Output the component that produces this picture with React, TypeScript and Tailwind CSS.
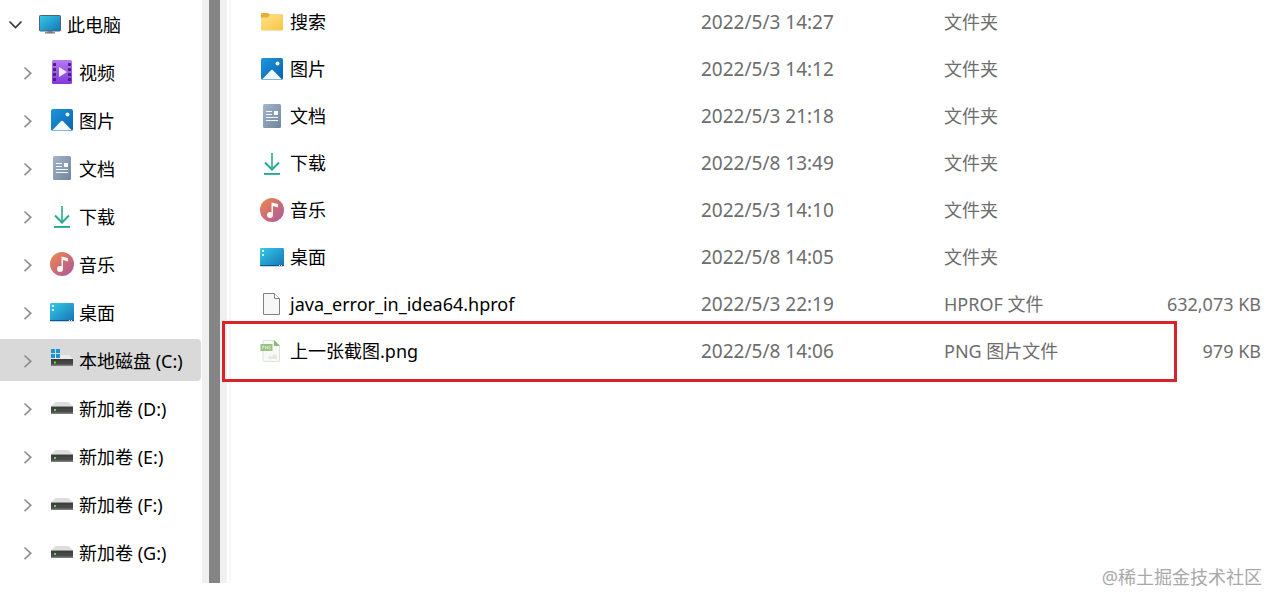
import React, { useState } from 'react';
import clsx from 'clsx';

type IconName =
  | 'pc' | 'video' | 'picture' | 'document' | 'download' | 'music'
  | 'desktop' | 'system' | 'drive' | 'folder' | 'file' | 'png';

interface TreeNode {
  label: string;
  icon: IconName;
}

interface FileRow {
  name: string;
  icon: IconName;
  date: string;
  type: string;
  size?: string;
  marked?: boolean;
}

const TREE: TreeNode[] = [
  { label: '视频', icon: 'video' },
  { label: '图片', icon: 'picture' },
  { label: '文档', icon: 'document' },
  { label: '下载', icon: 'download' },
  { label: '音乐', icon: 'music' },
  { label: '桌面', icon: 'desktop' },
  { label: '本地磁盘 (C:)', icon: 'system' },
  { label: '新加卷 (D:)', icon: 'drive' },
  { label: '新加卷 (E:)', icon: 'drive' },
  { label: '新加卷 (F:)', icon: 'drive' },
  { label: '新加卷 (G:)', icon: 'drive' },
];

const FILES: FileRow[] = [
  { name: '搜索', icon: 'folder', date: '2022/5/3 14:27', type: '文件夹' },
  { name: '图片', icon: 'picture', date: '2022/5/3 14:12', type: '文件夹' },
  { name: '文档', icon: 'document', date: '2022/5/3 21:18', type: '文件夹' },
  { name: '下载', icon: 'download', date: '2022/5/8 13:49', type: '文件夹' },
  { name: '音乐', icon: 'music', date: '2022/5/3 14:10', type: '文件夹' },
  { name: '桌面', icon: 'desktop', date: '2022/5/8 14:05', type: '文件夹' },
  { name: 'java_error_in_idea64.hprof', icon: 'file', date: '2022/5/3 22:19', type: 'HPROF 文件', size: '632,073 KB' },
  { name: '上一张截图.png', icon: 'png', date: '2022/5/8 14:06', type: 'PNG 图片文件', size: '979 KB', marked: true },
];

// Shared gradients, rendered once and referenced by every icon
const Gradients = () => (
  <svg className="absolute size-0" aria-hidden="true">
    <defs>
      <linearGradient id="g-pc" x1="0" y1="0" x2="1" y2="1">
        <stop offset="0" stopColor="#35cbea" />
        <stop offset="1" stopColor="#1574b4" />
      </linearGradient>
      <linearGradient id="g-video" x1="0" y1="0" x2="0" y2="1">
        <stop offset="0" stopColor="#b57af0" />
        <stop offset="1" stopColor="#8338dc" />
      </linearGradient>
      <linearGradient id="g-picture" x1="0" y1="0" x2="1" y2="1">
        <stop offset="0" stopColor="#1c96dc" />
        <stop offset="1" stopColor="#0a63ae" />
      </linearGradient>
      <linearGradient id="g-document" x1="0" y1="0" x2="1" y2="1">
        <stop offset="0" stopColor="#a3b5ca" />
        <stop offset="1" stopColor="#71859f" />
      </linearGradient>
      <linearGradient id="g-music" x1="0" y1="0" x2="1" y2="1">
        <stop offset="0" stopColor="#ef8a52" />
        <stop offset="0.5" stopColor="#cf6d70" />
        <stop offset="1" stopColor="#a758a6" />
      </linearGradient>
      <linearGradient id="g-folder" x1="0" y1="0" x2="1" y2="1">
        <stop offset="0" stopColor="#ffe08a" />
        <stop offset="1" stopColor="#f7c645" />
      </linearGradient>
      <linearGradient id="g-drive" x1="0" y1="0" x2="0" y2="1">
        <stop offset="0" stopColor="#3a3a3a" />
        <stop offset="0.7" stopColor="#4c4c4c" />
        <stop offset="1" stopColor="#8a8a8a" />
      </linearGradient>
    </defs>
  </svg>
);

const drawings: Record<IconName, React.ReactNode> = {
  pc: (
    <>
      <path d="M9.5 19h5v2h-5z" fill="#9aa3aa" />
      <path d="M7 20.2h10v1.3H7z" fill="#6b747b" />
      <rect x="1.5" y="3.5" width="21" height="15.5" rx="0.8" fill="url(#g-pc)" stroke="#4c6570" />
    </>
  ),
  video: (
    <>
      <rect x="2" y="0" width="20" height="24" rx="1.5" fill="url(#g-video)" />
      {[3, 8, 13, 18].map(y => (
        <g key={y} fill="#4b2183">
          <rect x="3" y={y} width="3" height="3" rx="0.5" />
          <rect x="18" y={y} width="3" height="3" rx="0.5" />
        </g>
      ))}
      <path d="M9 7v10l8-5z" fill="#f3eafd" />
    </>
  ),
  picture: (
    <>
      <rect x="1" y="1" width="22" height="22" rx="2" fill="url(#g-picture)" />
      <path d="M2 22.5l8.7-9a1.8 1.8 0 0 1 2.6 0l8.7 9z" fill="#f2f9ff" />
      <circle cx="17.5" cy="6.5" r="2" fill="#e8f6ff" />
    </>
  ),
  document: (
    <>
      <rect x="3" y="0" width="18" height="24" rx="1.5" fill="url(#g-document)" />
      <path d="M6 7.5h6M6 10.5h6M6 13.500h12M6 16.500h12" stroke="#f4f7fa" strokeWidth="1.1" />
      <rect x="14" y="7" width="4" height="4" fill="#ffffff" />
    </>
  ),
  download: (
    <>
      <path d="M12 2v16.500" fill="none" stroke="#3bb795" strokeWidth="1.8" />
      <path d="M5 11.500l7 7 7-7" fill="none" stroke="#27ab92" strokeWidth="2" />
      <path d="M4 22h16v1.800H4z" fill="#1ba38f" />
    </>
  ),
  music: (
    <>
      <circle cx="12" cy="12" r="12" fill="url(#g-music)" />
      <circle cx="10" cy="17" r="3" fill="#fff8f5" />
      <path d="M11.500 4.500l6.500 1.500v3.500l-5-1.500V17h-1.500z" fill="#fff8f5" />
    </>
  ),
  desktop: (
    <>
      <rect x="0" y="3" width="24" height="18" rx="1.200" fill="url(#g-pc)" />
      <path d="M0 20h24v0.500a0.800 0.800 0 0 1-.8.8H.8a.8.8 0 0 1-.8-.8z" fill="#12568e" />
      <path d="M2 5h2v2H2zM2 9h2v2H2zM19 20h1v1h-1zM21 20h1v1h-1z" fill="#dff8ff" />
    </>
  ),
  system: (
    <>
      <path d="M5 7h14l4 4H1z" fill="#ebebeb" />
      <rect x="1" y="11" width="22" height="7" fill="url(#g-drive)" />
      <path d="M4 13.500h2v2H4z" fill="#55dd45" />
      <path d="M1 1h4v4H1zM6 1h4v4H6zM1 6h4v4H1zM6 6h4v4H6z" fill="#1b93d4" />
    </>
  ),
  drive: (
    <>
      <path d="M5.500 6h13L23 10.500H1z" fill="#dedede" />
      <rect x="1" y="10.500" width="22" height="7.500" fill="url(#g-drive)" />
      <path d="M4 13h2v2H4z" fill="#55dd45" />
    </>
  ),
  folder: (
    <>
      <path d="M1 4.500A1.500 1.500 0 0 1 2.500 3h5.200L10 4.500h12a1 1 0 0 1 1 1V9H1z" fill="#e7ad2c" />
      <path d="M1 7.500h6.500L10 5h12a1 1 0 0 1 1 1v13.500a1 1 0 0 1-1 1H2a1 1 0 0 1-1-1z" fill="url(#g-folder)" />
    </>
  ),
  file: (
    <>
      <path d="M3.500 1.500h11l5 5v16h-16z" fill="#f7f7f7" stroke="#808080" />
      <path d="M14.500 1.500v5h5" fill="#ffffff" stroke="#808080" />
    </>
  ),
  png: (
    <>
      <path d="M3 1.500h11.500l5 5V21a1.500 1.500 0 0 1-1.500 1.500H4.500A1.500 1.500 0 0 1 3 21z" fill="#f8faf7" stroke="#dce5d9" />
      <path d="M14 1l6 6h-6z" fill="#8fb878" />
      <rect x="0.500" y="5" width="12" height="7" fill="#9bc082" />
      <path d="M2.500 7v3M2.500 7h1.500v1.500H2.500M5.500 10V7l2 3V7M10.500 7.500H9V10h1.500V8.800" fill="none" stroke="#d5e6ca" strokeWidth="0.800" />
      <path d="M8 20l1-3.500 3 1 2-2.500 3 1v4z" fill="#e4eae2" />
    </>
  ),
};

const Icon = ({ name }: { name: IconName }) => (
  <svg viewBox="0 0 24 24" className="size-6 shrink-0" aria-hidden="true">
    {drawings[name]}
  </svg>
);

const TreeItem = ({ node, selected, onClick }: { node: TreeNode, selected: boolean, onClick: () => void }) => (
  <button
    onClick={onClick}
    className={clsx('flex h-[42px] items-center rounded-r-sm pl-5 text-left', selected && 'bg-[#d9d9d9]')}
  >
    <svg viewBox="0 0 16 16" className="mr-3.5 size-4 shrink-0" fill="none" stroke="#8c8c8c" strokeWidth="1.6" aria-hidden="true">
      <path d="M4.500 3.500L10.800 9.300 4.500 15.200" />
    </svg>
    <Icon name={node.icon} />
    <span className="mt-0.5 ml-[5px] whitespace-nowrap">{node.label}</span>
  </button>
);

export default function App() {
  const [selected, setSelected] = useState('本地磁盘 (C:)');
  const [open, setOpen] = useState(true);

  return (
    <div className="relative min-h-screen overflow-hidden bg-white font-['Noto_Sans','Noto_Sans_CJK_SC',sans-serif] text-[18px] leading-6 text-black">
      <Gradients />
      <div className="flex items-start">
        {/* Navigation tree */}
        <nav className="flex w-[202px] shrink-0 flex-col gap-1.5 pt-[3px] pr-px pb-2.5">
          <button onClick={() => setOpen(!open)} className="flex h-[42px] items-center pl-2 text-left">
            <svg viewBox="0 0 16 16" className="mr-3.5 size-4 shrink-0" fill="none" stroke="#333333" strokeWidth="1.6" aria-hidden="true">
              <path d="M1.500 5.500L7.500 11.500 13.500 5.500" />
            </svg>
            <Icon name="pc" />
            <span className="mt-0.5 ml-[5px]">此电脑</span>
          </button>
          {open && TREE.map(node => (
            <TreeItem
              key={node.label}
              node={node}
              selected={node.label === selected}
              onClick={() => setSelected(node.label)}
            />
          ))}
        </nav>

        {/* Scrollbar and splitter */}
        <div className="flex w-[29px] shrink-0 self-stretch">
          <div className="w-[7px] bg-[#f0f0f0]" />
          <div className="w-[11px] bg-[#858585]" />
          <div className="w-[7px] bg-[#f0f0f0]" />
          <div className="ml-0.5 w-0.5 bg-[#f7f7f7]" />
        </div>

        {/* File list */}
        <main className="-mt-0.5 min-w-0 flex-1">
          <table className="w-full table-fixed">
            <colgroup>
              <col />
              <col className="w-[243px]" />
              <col className="w-[180px]" />
              <col className="w-[157px]" />
            </colgroup>
            <tbody>
              {FILES.map(file => (
                <tr key={file.name} className="relative h-[47px] whitespace-nowrap text-[#6d6d6d]">
                  <td className="pl-[29px] text-black">
                    <div className="flex items-center gap-[6px]">
                      <Icon name={file.icon} />
                      <span>{file.name}</span>
                    </div>
                    {file.marked && (
                      <div className="pointer-events-none absolute -top-1.5 right-[104px] -bottom-2 -left-[9px] border-3 border-[#d9232b]" />
                    )}
                  </td>
                  <td className="text-[19px]">{file.date}</td>
                  <td>{file.type}</td>
                  <td className="pr-5 text-right">{file.size}</td>
                </tr>
              ))}
            </tbody>
          </table>
        </main>
      </div>
      <p className="absolute right-[19px] bottom-[17px] text-[#a8a8a8]">@稀土掘金技术社区</p>
    </div>
  );
}
